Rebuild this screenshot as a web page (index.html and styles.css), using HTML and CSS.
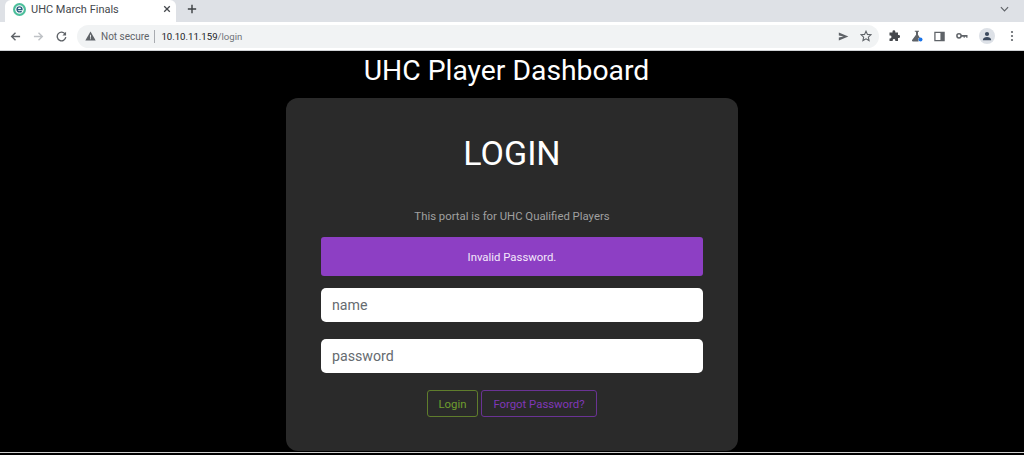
FILE: index.html
```html
<!DOCTYPE html>
<html lang="en">
<head>
<meta charset="utf-8">
<title>UHC March Finals</title>
<link rel="stylesheet" href="styles.css">
</head>
<body>
<header class="chrome">
  <div class="tabstrip">
    <div class="tab">
      <svg class="favicon" viewBox="0 0 14 14" width="13" height="13"><circle cx="7" cy="7" r="7" fill="#4cbf9b"/><circle cx="7" cy="7" r="4.6" fill="#fff"/><path d="M3.6 7a3.4 3.4 0 0 1 6.8 0v.9H5.4c.3 1 1.9 1.4 3.6.5l.8 1.2c-2.7 1.6-6.2.6-6.2-2.6zM5.4 6.4h3.2a1.6 1.6 0 0 0-3.2 0z" fill="#2c5f80"/></svg>
      <span class="tab-title">UHC March Finals</span>
      <svg class="tab-close" viewBox="0 0 10 10" width="8" height="8"><path d="M1.5 1.5l7 7M8.5 1.5l-7 7" stroke="#45484d" stroke-width="1.6"/></svg>
    </div>
    <svg class="new-tab" viewBox="0 0 12 12" width="10" height="10"><path d="M6 1v10M1 6h10" stroke="#3c4043" stroke-width="1.7"/></svg>
    <svg class="tab-menu" viewBox="0 0 10 6" width="9" height="6"><path d="M1 1l4 4 4-4" fill="none" stroke="#5f6368" stroke-width="1.3"/></svg>
  </div>
  <div class="toolbar">
    <div class="nav">
      <svg viewBox="0 0 12 12" width="11" height="11"><path d="M11 6H2M6 1.8L1.8 6 6 10.2" fill="none" stroke="#5f6368" stroke-width="1.5"/></svg>
      <svg viewBox="0 0 12 12" width="11" height="11"><path d="M1 6h9M6 1.8L10.2 6 6 10.2" fill="none" stroke="#bfc2c6" stroke-width="1.5"/></svg>
      <svg viewBox="0 0 12 12" width="11" height="11"><path d="M10 3.4A4.7 4.7 0 1 0 10.7 6.8" fill="none" stroke="#5f6368" stroke-width="1.5"/><path d="M11 0.8v4H7z" fill="#5f6368"/></svg>
    </div>
    <div class="omnibox">
      <svg viewBox="0 0 12 11" width="11" height="10"><path d="M6 0.5l5.7 10H.3z" fill="#5f6368"/><path d="M5.5 4h1v3.4h-1zM5.5 8h1v1.1h-1z" fill="#f1f3f4"/></svg>
      <span class="secure">Not secure</span>
      <span class="sep"></span>
      <span class="url"><span class="host">10.10.11.159</span>/login</span>
      <svg class="share" viewBox="0 0 12 10" width="11" height="9"><path d="M.8.6L11.4 5 .8 9.4V6.2L6 5 .8 3.8z" fill="#5f6368"/></svg>
      <svg class="star" viewBox="0 0 12 12" width="12" height="12"><path d="M6 1.2l1.45 3.2 3.5.4-2.6 2.35.72 3.45L6 8.85 2.93 10.6l.72-3.45-2.6-2.35 3.5-.4z" fill="none" stroke="#5f6368" stroke-width="1.1"/></svg>
    </div>
    <div class="actions">
      <svg viewBox="0 0 12 12" width="12" height="12"><path d="M4.5 1.6a1.4 1.4 0 0 1 2.8 0v.8H10v2.7h.7a1.4 1.4 0 0 1 0 2.8H10v3H7.3v-.7a1.3 1.3 0 0 0-2.6 0v.7H1.5V8.4h.6a1.4 1.4 0 0 0 0-2.8h-.6V2.4h3z" fill="#45484d"/></svg>
      <svg viewBox="0 0 12 12" width="12" height="12"><path d="M3.8.8h4.2v1H7v3l2 3.2H7.5v3.4H2c-.9 0-1.3-.8-.9-1.5L5 4.8v-3H3.8z" fill="#5f6368"/><circle cx="9.5" cy="9.6" r="2" fill="#1a73e8"/></svg>
      <svg viewBox="0 0 12 12" width="11" height="11"><path d="M1 1.5h10v9H1z" fill="none" stroke="#5f6368" stroke-width="1.4"/><path d="M7 1.5h4v9H7z" fill="#5f6368"/></svg>
      <svg viewBox="0 0 12 8" width="12" height="8"><circle cx="3" cy="3.8" r="2.1" fill="none" stroke="#5f6368" stroke-width="1.5"/><path d="M5 3h6.5v2.8h-1.3V4.7H8.8v1.1H7.6V4.7H5z" fill="#5f6368"/></svg>
      <span class="avatar"><svg viewBox="0 0 12 12" width="10" height="10"><circle cx="6" cy="3.6" r="2.5" fill="#3c4a5e"/><path d="M1 11c0-2.6 2.4-3.9 5-3.9s5 1.3 5 3.9z" fill="#3c4a5e"/></svg></span>
      <svg class="dots" viewBox="0 0 4 12" width="4" height="12"><circle cx="2" cy="2" r="1.1" fill="#5f6368"/><circle cx="2" cy="6" r="1.1" fill="#5f6368"/><circle cx="2" cy="10" r="1.1" fill="#5f6368"/></svg>
    </div>
  </div>
</header>
<main class="page">
  <h1 class="title">UHC Player Dashboard</h1>
  <section class="card">
    <h2 class="login-heading">LOGIN</h2>
    <p class="portal">This portal is for UHC Qualified Players</p>
    <div class="alert">Invalid Password.</div>
    <input class="field field-name" type="text" placeholder="name">
    <input class="field" type="password" placeholder="password">
    <div class="buttons">
      <button class="btn btn-login" type="button">Login</button>
      <button class="btn btn-forgot" type="button">Forgot Password?</button>
    </div>
  </section>
</main>
<div class="bottom-line"></div>
</body>
</html>
```

FILE: styles.css
```css
* { box-sizing: border-box; }
html, body { margin: 0; height: 455px; overflow: hidden; }
body { background: #000; font-family: Roboto, "Liberation Sans", sans-serif; display: flex; flex-direction: column; }

.chrome { height: 51px; flex: none; background: #fff; border-bottom: 1px solid #d0d2d5; font-family: Roboto, "Noto Sans", sans-serif; }
.tabstrip { height: 22px; background: #dee1e6; display: flex; align-items: center; padding-left: 5px; }
.tab { width: 171px; height: 22px; background: #fff; border-radius: 6px 6px 0 0; display: flex; align-items: center; padding: 0 5px 4px 8px; }
.favicon { flex: none; }
.tab-title { margin-left: 5px; font-size: 11px; color: #45484d; white-space: nowrap; flex: 1; }
.tab-close { flex: none; }
.new-tab { margin: 0 0 4px 11px; flex: none; }
.tab-menu { margin: 0 15px 4px auto; flex: none; }

.toolbar { height: 28px; background: #fff; display: flex; align-items: center; padding-left: 10px; }
.nav { display: flex; gap: 12px; align-items: center; }
.omnibox { margin-left: 10px; width: 802px; height: 23px; border-radius: 12px; background: #f1f3f4; display: flex; align-items: center; padding: 0 7px 0 8px; font-size: 10px; }
.secure { margin-left: 5px; color: #5f6368; white-space: nowrap; }
.sep { width: 1px; height: 13px; background: #a8abb0; margin: 0 5px 0 5px; }
.url { color: #70757a; white-space: nowrap; font-size: 9.6px; margin-left: 1px; }
.host { color: #202124; }
.share { margin-left: auto; }
.star { margin-left: 11px; }
.actions { display: flex; align-items: center; gap: 11px; margin-left: 9px; }
.avatar { width: 16px; height: 16px; border-radius: 50%; background: #dde1e7; display: flex; align-items: center; justify-content: center; }
.dots { margin-left: 4px; }

.page { flex: 1; min-height: 0; display: flex; flex-direction: column; align-items: center; }
.title { margin: 0; padding-right: 11px; font-size: 28.3px; font-weight: 400; line-height: 40px; color: #fff; }
.card { margin-top: 7px; width: 452px; height: 353px; background: #2a2a2a; border-radius: 12px; padding: 34px 35px 0; display: flex; flex-direction: column; align-items: center; }
.login-heading { margin: 0; font-size: 34px; font-weight: 400; line-height: 42px; color: #fff; }
.portal { margin: 33px 0 0; font-size: 11.35px; line-height: 18px; color: #a0a0a0; }
.alert { margin-top: 12px; width: 100%; height: 39px; background: #8d3fc4; border-radius: 3px; color: #f4e8fb; font-size: 11.35px; display: flex; align-items: center; justify-content: center; }
.field { display: block; width: 100%; height: 34px; background: #fff; border: 0; border-radius: 5px; padding: 0 11px; font-family: inherit; font-size: 14.2px; color: #555; outline: none; margin-top: 17px; }
.field-name { margin-top: 12px; }
.field::placeholder { color: #666b70; opacity: 1; }
.buttons { margin-top: 17px; display: flex; gap: 3px; }
.btn { height: 27px; background: transparent; border-radius: 3px; border: 1px solid; font-family: inherit; font-size: 11.35px; padding: 0; }
.btn-login { width: 51px; color: #6f9e2e; border-color: #5f7d2c; }
.btn-forgot { width: 116px; color: #8038b8; border-color: #6a3394; }

.bottom-line { height: 1px; flex: none; background: #cfcfcf; margin-bottom: 2px; }
```
